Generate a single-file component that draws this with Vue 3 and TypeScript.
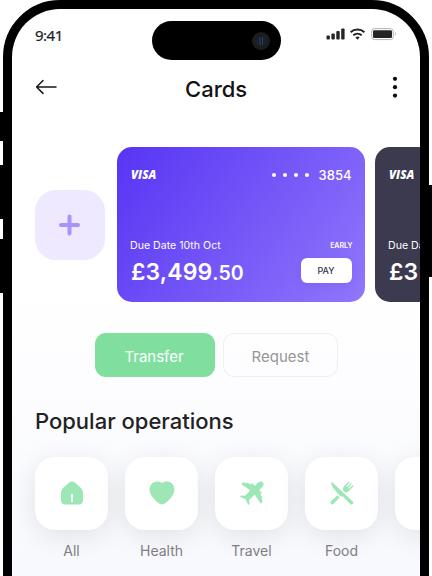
<script setup lang="ts">
interface PaymentCard {
  id: string
  theme: 'violet' | 'slate'
  due: string
  whole: string
  pence: string
  digits: string
}

interface Operation {
  id: string
  label: string
}

const cards: PaymentCard[] = [
  { id: 'main', theme: 'violet', due: 'Due Date 10th Oct', whole: '£3,499', pence: '.50', digits: '3854' },
  { id: 'second', theme: 'slate', due: 'Due Date', whole: '£3', pence: '', digits: '' },
]

const operations: Operation[] = [
  { id: 'all', label: 'All' },
  { id: 'health', label: 'Health' },
  { id: 'travel', label: 'Travel' },
  { id: 'food', label: 'Food' },
  { id: 'more', label: '' },
]
</script>

<template>
  <div class="stage">
    <i class="key key-mute"></i>
    <i class="key key-up"></i>
    <i class="key key-down"></i>
    <i class="key key-power"></i>
    <div class="phone">
      <main class="screen">
        <div class="island"><span class="lens"><svg viewBox="0 0 18 18" width="18" height="18"><path d="M8 5v8M10.500 5v8" stroke="#174a7d" stroke-width="1" /><path d="M5.500 7.500c-.8 2 0 4 1.500 5M12 5.500c1.700 1.500 1.500 4.500.5 6.500" fill="none" stroke="#15304f" stroke-width=".7" /></svg></span></div>

        <div class="status">
          <span class="time">9:41</span>
          <svg class="indicators" width="72" height="14" viewBox="0 0 72 14">
            <g fill="#242424">
              <rect x="0.500" y="8.500" width="3.400" height="4" rx="1" />
              <rect x="5.400" y="6.500" width="3.400" height="6" rx="1" />
              <rect x="10.300" y="4" width="3.400" height="8.500" rx="1" />
              <rect x="15.200" y="1.500" width="3.400" height="11" rx="1" />
            </g>
            <g fill="none" stroke="#242424" stroke-width="2">
              <path d="M24.600 5.300a10 10 0 0 1 13.800 0" />
              <path d="M27.300 8.300a6.200 6.200 0 0 1 8.400 0" />
            </g>
            <path d="M29.400 10.400a3.300 3.300 0 0 1 4.200 0L31.500 12.800Z" fill="#242424" />
            <rect x="45.700" y="1.600" width="21.600" height="11" rx="2.800" fill="none" stroke="#b5b1b1" stroke-width="1" />
            <rect x="47" y="3.200" width="19" height="7.800" rx="1.300" fill="#242424" />
            <path d="M69 5.300c1 .4 1 3.100 0 3.500Z" fill="#aaa" />
          </svg>
        </div>

        <header class="topbar">
          <svg width="22" height="16" viewBox="0 0 22 16" fill="none" stroke="#171717" stroke-width="1.500" stroke-linecap="round" stroke-linejoin="round"><path d="M1.600 8H21M8 1.500 1.600 8 8 14.400" /></svg>
          <h1>Cards</h1>
          <svg width="6" height="24" viewBox="0 0 6 24" fill="#0d0d0d"><circle cx="3" cy="3.800" r="2.100" /><circle cx="3" cy="12.200" r="2.100" /><circle cx="3" cy="20.600" r="2.100" /></svg>
        </header>

        <section class="wallet">
          <button class="add" aria-label="Add card">
            <svg width="22" height="22" viewBox="0 0 22 22" stroke="#a794fb" stroke-width="4" stroke-linecap="round"><path d="M10.500 2.500v17M2 11h17" /></svg>
          </button>
          <article v-for="card in cards" :key="card.id" class="card" :class="card.theme">
            <div class="card-top">
              <span class="visa">VISA</span>
              <span v-if="card.digits" class="number"><span class="dots"><i v-for="n in 4" :key="n"></i></span><b>{{ card.digits }}</b></span>
            </div>
            <div class="card-due"><span class="due">{{ card.due }}</span><span v-if="card.digits" class="early">EARLY</span></div>
            <div class="card-pay">
              <span class="amount">{{ card.whole }}<small>{{ card.pence }}</small></span>
              <button v-if="card.digits" class="pay">PAY</button>
            </div>
          </article>
        </section>

        <div class="actions">
          <button class="action transfer"><span>Transfer</span></button>
          <button class="action request"><span>Request</span></button>
        </div>

        <h2>Popular operations</h2>
        <section class="operations">
          <div v-for="op in operations" :key="op.id" class="operation">
            <div class="tile">
              <svg v-if="op.id === 'all'" width="24" height="24" viewBox="0 0 24 24"><path d="M8.800 1.800Q12 -.8 15.200 1.800L20.900 7Q23 9 23 11.500V19Q23 23.500 18.500 23.500H5.500Q1 23.500 1 19V11.500Q1 9 3.100 7Z" /><path class="door" d="M12 13v8" /></svg>
              <svg v-else-if="op.id === 'health'" width="26" height="24" viewBox="0 0 26 24"><path d="M13 1.900C16-.2 20-.1 22.800 2.200 26.500 5.800 26.200 11 22.500 16 20 19.300 17.300 21.800 15 23Q13 23.900 11 23C8.700 21.800 6 19.300 3.500 16-.2 11-.5 5.800 3.200 2.200 6-.1 10-.2 13 1.900Z" /></svg>
              <svg v-else-if="op.id === 'travel'" width="24" height="24" viewBox="0 0 24 24"><path d="M22.800 1.200C21.300-.2 18.800.8 17.500 2.100L15.200 4.400 13.300 3.900 13.400 2.700Q12.700 1.700 11.700 2.400L11.200 3.400 8.700 2.800 8.500 1.900Q7.500 1.200 6.700 2.300L3.100 1.300 1.300 3.300 10.200 9.200 5.200 14.800.9 14.500 0 15.800 5.600 18.300 8.200 23.900 9.500 23 9.100 18.800 14.800 13.800 20.600 22.600 22.600 20.900 21.600 17.200Q22.600 16.400 22 15.600L21.100 15.300 20.500 12.800 21.500 12.300Q22.200 11.300 21.200 10.600L20.100 10.700 19.600 8.800 21.900 6.500C23.200 5.200 24.300 2.700 22.800 1.200Z" /></svg>
              <svg v-else-if="op.id === 'food'" width="24" height="24" viewBox="0 0 24 24"><path d="M1.300.5 23 20.700Q24 22 22.800 23 21.500 24.200 20.200 23L13 15.400Q11.300 16 10.200 14.900L3.300 7.300Q.8 4.400 1.300.5Z" /><path d="M7.400 14.200 9.800 16.600 3.300 23.100Q2.100 24.100.9 23.100-.2 21.800.9 20.600ZM12.900 9.100Q12.600 6.500 14.200 5.100L18.800.5 19.700 1.400 16.200 5.100 17 5.900 20.900 2.200 21.800 3.100 18.100 7 18.900 7.800 22.600 4.300 23.500 5.200 19.200 9.700Q17.500 11.400 15.200 11.200Z" /></svg>
            </div>
            <span class="label">{{ op.label }}</span>
          </div>
        </section>
      </main>
    </div>
  </div>
</template>

<style>
body { background: #fff; }
</style>

<style scoped>
* { box-sizing: border-box; }
.stage {
  position: relative;
  width: 432px;
  height: 576px;
  overflow: hidden;
  padding: 0 3px;
  font-family: Inter, "Liberation Sans", sans-serif;
  color: #202022;
}
.key { position: absolute; width: 6px; background: #000; border-radius: 1px; left: -1px; }
.key-mute { top: 112px; height: 29px; }
.key-up { top: 165px; height: 54px; }
.key-down { top: 239px; height: 54px; }
.key-power { left: auto; right: -1px; top: 185px; height: 92px; }
.phone {
  height: 650px;
  border: 9px solid #000;
  border-radius: 57px;
  background: #000;
}
.screen {
  position: relative;
  width: 408px;
  height: 632px;
  padding-left: 23px;
  overflow: hidden;
  border-radius: 48px;
  background: linear-gradient(#fff 0, #fff 270px, #f8f9fe 567px);
}
.island {
  position: absolute;
  left: 140px;
  top: 12px;
  width: 129px;
  height: 39px;
  border-radius: 20px;
  background: #000;
  display: flex;
  align-items: center;
  justify-content: flex-end;
  padding-right: 11px;
}
.lens { display: flex; width: 18px; height: 18px; border-radius: 50%; background: #1d1d1f; }
.status { display: flex; height: 54px; padding: 17px 22px 0 0; justify-content: space-between; }
.time { font: 400 15px/18px "Noto Sans", sans-serif; letter-spacing: -.5px; -webkit-text-stroke: .2px; }
.indicators { margin-top: 1px; }
.topbar {
  display: grid;
  grid-template-columns: 22px 1fr 6px;
  height: 48px;
  align-items: center;
  padding-right: 22px;
}
.topbar h1 { margin: 4px 0 0 128px; font-size: 22px; line-height: 28px; font-weight: 500; color: #131313; }
.wallet { display: flex; margin-top: 36px; height: 155px; align-items: center; }
button { border: 0; padding: 0; font-family: inherit; }
.add {
  flex: none;
  display: flex;
  align-items: center;
  justify-content: center;
  width: 70px;
  height: 70px;
  margin-right: 11.500px;
  border-radius: 21px;
  background: #eee9fe;
}
.card { flex: none; width: 248px; height: 155px; margin-right: 10px; border-radius: 15px; padding: 20px 13px 0 14.500px; color: #fff; }
.violet { background: linear-gradient(125deg, #5834f4, #9077fb); }
.slate { background: #3b3a4f; }
.card-top { display: flex; height: 16px; align-items: center; justify-content: space-between; }
.visa { font: italic 800 11.500px/16px "Open Sans", sans-serif; }
.number { display: flex; align-items: center; gap: 10px; font-size: 13px; }
.number b { font-weight: 500; }
.dots { display: flex; gap: 7px; }
.dots i { width: 4px; height: 4px; border-radius: 50%; background: #fff; }
.card-due { display: flex; justify-content: space-between; margin-top: 53.500px; height: 18px; align-items: center; }
.due { margin-left: -1px; font-size: 10.600px; white-space: nowrap; }
.slate .due { width: 32px; overflow: hidden; }
.early { margin-right: -1px; font-size: 7px; font-weight: 600; }
.card-pay { display: flex; justify-content: space-between; margin-top: 3px; height: 26px; }
.amount { font-size: 23px; line-height: 29px; font-weight: 600; white-space: nowrap; letter-spacing: .1px; }
.amount small { font-size: 19.500px; }
.pay { width: 51px; height: 25.500px; border-radius: 6px; background: #fff; color: #34344a; font-size: 9px; font-weight: 500; box-shadow: 0 3px 8px #4328a01a; }
.actions { display: flex; gap: 8px; margin: 31px 0 0 60px; }
.action { height: 44px; border-radius: 11px; font-size: 15px; }
.transfer { width: 120px; background: #80df9f; color: #fff; }
.request { width: 115px; background: transparent; border: 1.500px solid #efeff2; color: #969696; }
.transfer span { position: relative; left: -1px; top: 1px; }
.request span { position: relative; top: 1px; }
h2 { margin: 29.500px 0 0; font-size: 22px; line-height: 28px; font-weight: 500; white-space: nowrap; color: #222224; }
.operations { display: flex; gap: 17px; margin-top: 22px; }
.operation { flex: none; width: 73px; text-align: center; }
.tile { display: flex; align-items: center; justify-content: center; height: 73px; border-radius: 20px; background: #fff; box-shadow: 0 6px 28px #0000001a; }
.operation { position: relative; }
.tile svg { fill: #9ce7b5; overflow: visible; }
.door { fill: none; stroke: #fff; stroke-width: 2; }
.label { display: block; margin-top: 12px; font-size: 14px; line-height: 18px; color: #7e7e80; }
</style>
